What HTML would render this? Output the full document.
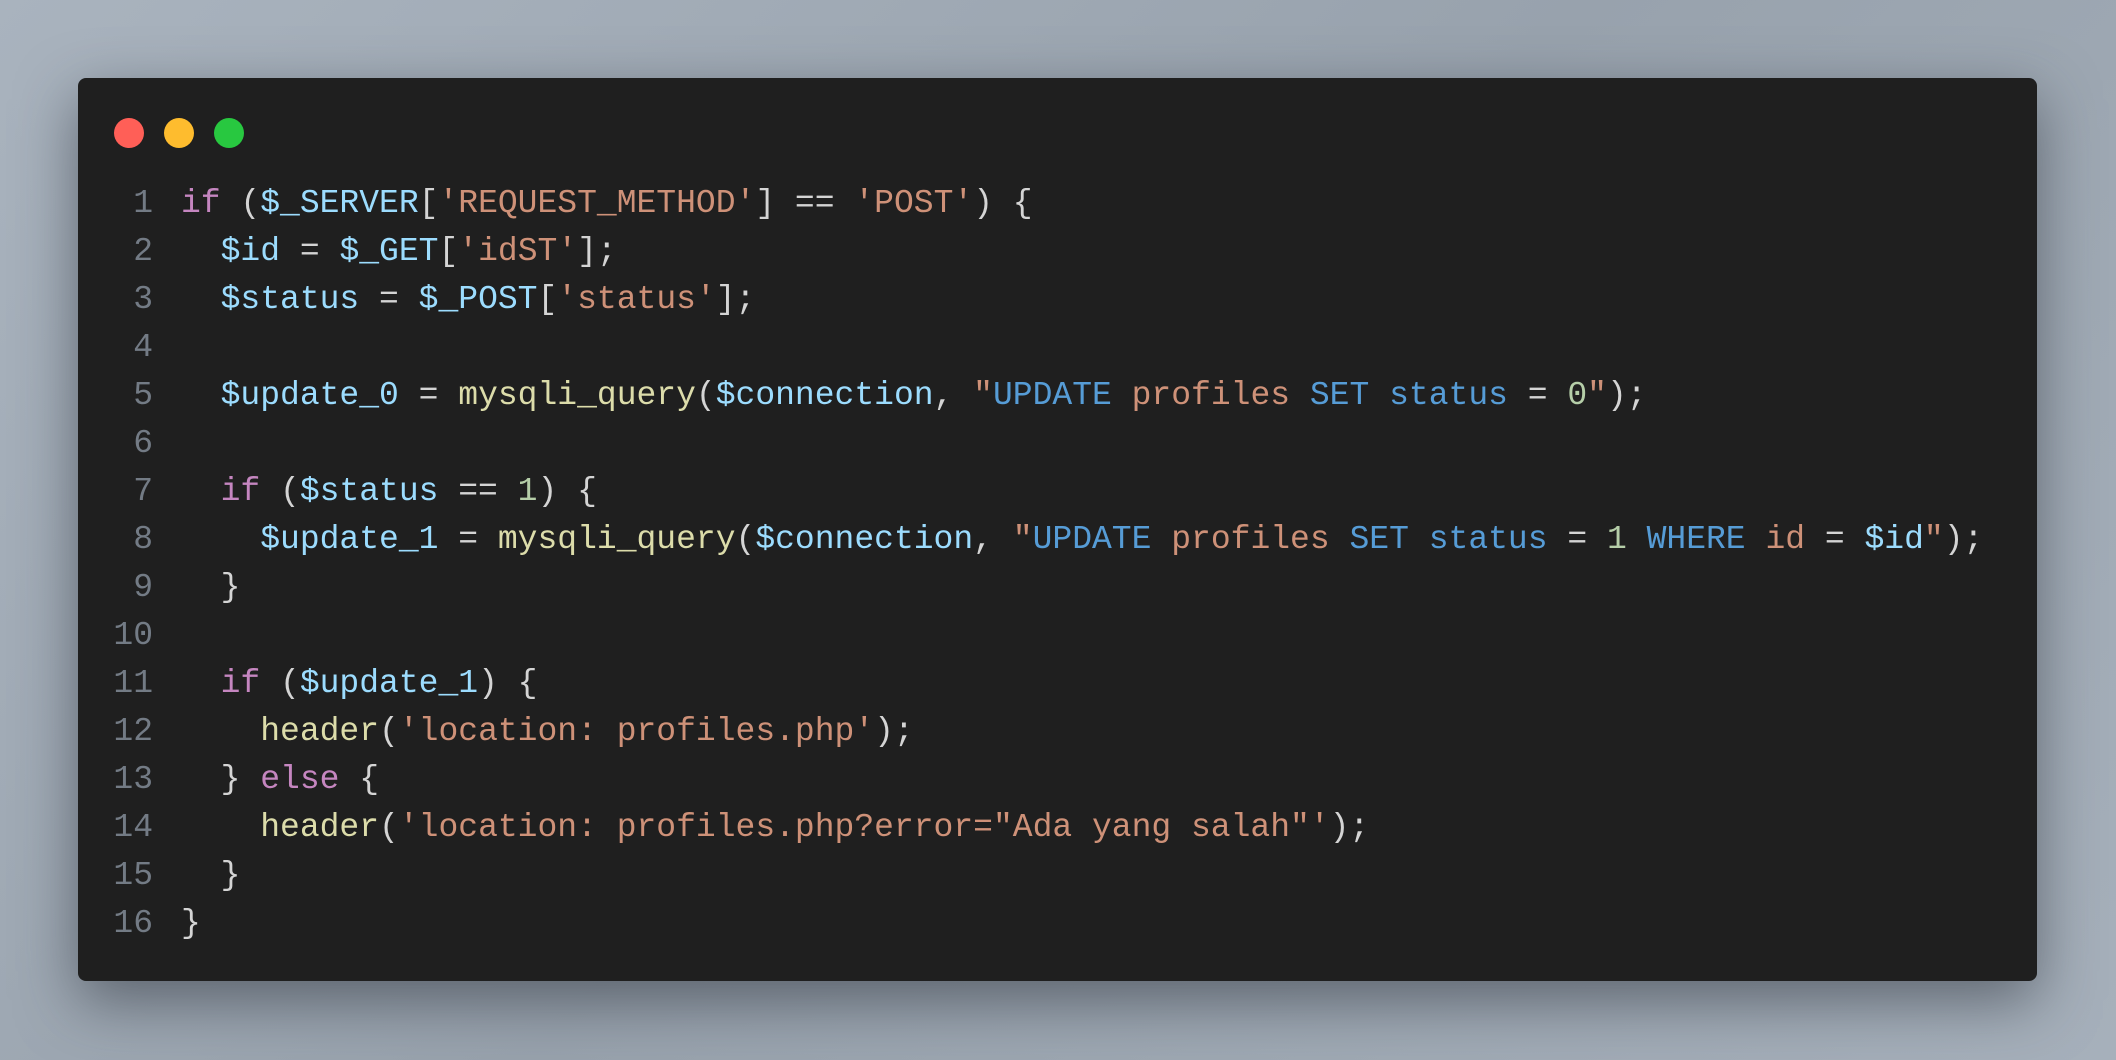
<!DOCTYPE html>
<html><head><meta charset="utf-8"><style>
html,body{margin:0;padding:0;width:2116px;height:1060px;overflow:hidden;background:linear-gradient(135deg,#a9b3be,#98a2ad 50%,#a6b0bb);}
.win{position:absolute;left:78px;top:78px;width:1959px;height:903px;background:#1f1f1f;border-radius:8px;box-shadow:0 20px 60px rgba(40,45,55,.55);}
.dot{position:absolute;top:40px;width:30px;height:30px;border-radius:50%;}
pre{position:absolute;margin:0;top:102px;left:0;font-family:"Liberation Mono",monospace;font-size:33px;line-height:48px;color:#d4d4d4;}
.ln{display:inline-block;width:75px;text-align:right;color:#737b85;margin-right:28px;}
.k{color:#c586c0}.v{color:#9cdcfe}.s{color:#ce9178}.f{color:#dcdcaa}.n{color:#b5cea8}.q{color:#569cd6}
</style></head><body>
<div class="win">
<div class="dot" style="left:36px;background:#ff5f57"></div>
<div class="dot" style="left:86px;background:#febc2e"></div>
<div class="dot" style="left:136px;background:#28c840"></div>
<pre><span class="ln">1</span><span class="k">if</span> (<span class="v">$_SERVER</span>[<span class="s">'REQUEST_METHOD'</span>] == <span class="s">'POST'</span>) {
<span class="ln">2</span>  <span class="v">$id</span> = <span class="v">$_GET</span>[<span class="s">'idST'</span>];
<span class="ln">3</span>  <span class="v">$status</span> = <span class="v">$_POST</span>[<span class="s">'status'</span>];
<span class="ln">4</span>
<span class="ln">5</span>  <span class="v">$update_0</span> = <span class="f">mysqli_query</span>(<span class="v">$connection</span>, <span class="s">"</span><span class="q">UPDATE</span> <span class="s">profiles</span> <span class="q">SET</span> <span class="q">status</span> = <span class="n">0</span><span class="s">"</span>);
<span class="ln">6</span>
<span class="ln">7</span>  <span class="k">if</span> (<span class="v">$status</span> == <span class="n">1</span>) {
<span class="ln">8</span>    <span class="v">$update_1</span> = <span class="f">mysqli_query</span>(<span class="v">$connection</span>, <span class="s">"</span><span class="q">UPDATE</span> <span class="s">profiles</span> <span class="q">SET</span> <span class="q">status</span> = <span class="n">1</span> <span class="q">WHERE</span> <span class="s">id</span> = <span class="v">$id</span><span class="s">"</span>);
<span class="ln">9</span>  }
<span class="ln">10</span>
<span class="ln">11</span>  <span class="k">if</span> (<span class="v">$update_1</span>) {
<span class="ln">12</span>    <span class="f">header</span>(<span class="s">'location: profiles.php'</span>);
<span class="ln">13</span>  } <span class="k">else</span> {
<span class="ln">14</span>    <span class="f">header</span>(<span class="s">'location: profiles.php?error="Ada yang salah"'</span>);
<span class="ln">15</span>  }
<span class="ln">16</span>}</pre>
</div>
</body></html>
